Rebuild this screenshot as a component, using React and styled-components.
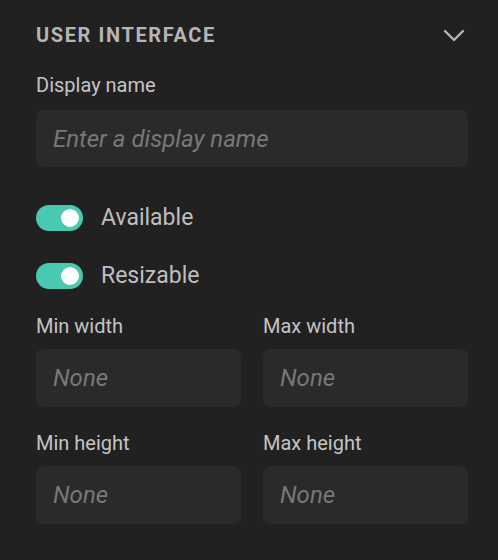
import React from "react";
import styled, { createGlobalStyle } from "styled-components";

const Global = createGlobalStyle`
  html, body { margin: 0; padding: 0; background: #212121; }
  body { font-family: Roboto, "Liberation Sans", sans-serif; }
`;

const Panel = styled.div`
  width: 498px;
  height: 560px;
  box-sizing: border-box;
  padding: 23px 30px 0 36px;
  background: #212121;
  display: flex;
  flex-direction: column;
`;

const Header = styled.div`
  display: flex;
  align-items: center;
  justify-content: space-between;
  height: 24px;
`;

const Title = styled.h2`
  margin: 0;
  font-size: 20px;
  line-height: 24px;
  font-weight: 700;
  letter-spacing: 1.6px;
  color: #b5b5b5;
`;

const Chevron = styled.svg`
  width: 22px;
  height: 13px;
  margin-right: 3px;
  margin-top: 1px;
`;

const Field = styled.div`
  display: flex;
  flex-direction: column;
  gap: ${(p) => p.$gap || 12}px;
  margin-top: ${(p) => p.$top || 0}px;
  min-width: 0;
`;

const Label = styled.label`
  font-size: 20px;
  line-height: 24px;
  color: #c4c4c4;
`;

const Input = styled.input`
  box-sizing: border-box;
  width: 100%;
  height: ${(p) => p.$h || 58}px;
  border: none;
  outline: none;
  border-radius: 7px;
  background: #2a2a2a;
  padding: 0 17px;
  font-family: Roboto, "Liberation Sans", sans-serif;
  font-size: 24px;
  font-style: italic;
  color: #ddd;
  &::placeholder {
    color: #787878;
    font-style: italic;
  }
`;

const ToggleRow = styled.div`
  display: flex;
  align-items: center;
  gap: 18px;
  margin-top: ${(p) => p.$top}px;
`;

const Switch = styled.div`
  position: relative;
  width: 47px;
  height: 26px;
  border-radius: 13px;
  background: #48c9b0;
  flex-shrink: 0;
  &::after {
    content: "";
    position: absolute;
    top: 4px;
    right: 4px;
    width: 18px;
    height: 18px;
    border-radius: 50%;
    background: #ffffff;
  }
`;

const ToggleText = styled.span`
  font-size: 23px;
  line-height: 26px;
  color: #bfbfbf;
`;

const Grid = styled.div`
  display: grid;
  grid-template-columns: 1fr 1fr;
  column-gap: 22px;
  row-gap: 24px;
  margin-top: 25px;
`;

export default function App() {
  return (
    <>
      <Global />
      <Panel>
        <Header>
          <Title>USER INTERFACE</Title>
          <Chevron viewBox="0 0 22 13" fill="none">
            <path d="M2 2 L11 11 L20 2" stroke="#b5b5b5" strokeWidth="2.4" strokeLinecap="round" strokeLinejoin="round" />
          </Chevron>
        </Header>
        <Field $top={26} $gap={13}>
          <Label>Display name</Label>
          <Input placeholder="Enter a display name" $h={57} />
        </Field>
        <ToggleRow $top={38}>
          <Switch />
          <ToggleText>Available</ToggleText>
        </ToggleRow>
        <ToggleRow $top={32}>
          <Switch />
          <ToggleText>Resizable</ToggleText>
        </ToggleRow>
        <Grid>
          <Field $gap={11}>
            <Label>Min width</Label>
            <Input placeholder="None" />
          </Field>
          <Field $gap={11}>
            <Label>Max width</Label>
            <Input placeholder="None" />
          </Field>
          <Field $gap={11}>
            <Label>Min height</Label>
            <Input placeholder="None" />
          </Field>
          <Field $gap={11}>
            <Label>Max height</Label>
            <Input placeholder="None" />
          </Field>
        </Grid>
      </Panel>
    </>
  );
}
